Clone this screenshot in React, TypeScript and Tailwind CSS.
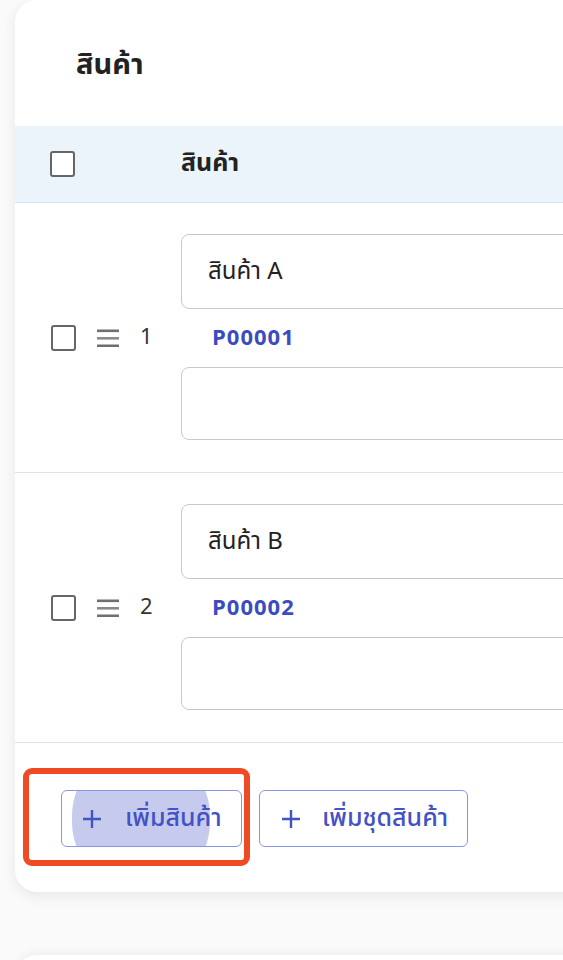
import React from "react";

const font = { fontFamily: '"Noto Sans Thai", "Noto Sans", "DejaVu Sans", sans-serif' };

function Checkbox() {
  return <div className="w-[25px] h-[26px] rounded-[3px] border-[2.5px] border-[#666666] bg-white shrink-0" />;
}

function DragIcon() {
  return (
    <svg width="22" height="18" viewBox="0 0 22 18" className="shrink-0">
      <rect x="0" y="0.5" width="22" height="2.6" fill="#6f6f6f" />
      <rect x="0" y="8" width="22" height="2.6" fill="#8a8a8a" />
      <rect x="0" y="15.5" width="22" height="2.6" fill="#6f6f6f" />
    </svg>
  );
}

function Plus() {
  return (
    <svg width="20" height="20" viewBox="0 0 20 20" className="relative shrink-0">
      <path d="M10 1v18M1 10h18" stroke="#4352c4" strokeWidth="2.4" />
    </svg>
  );
}

function Row({ n, name, code }: { n: number; name: string; code: string }) {
  return (
    <div className="h-[270px] border-b border-[#e3e3e3] flex">
      <div className="w-[166px] flex items-center pl-[36px]">
        <Checkbox />
        <div className="ml-[21px]"><DragIcon /></div>
        <span className="ml-[21px] text-[22px] text-[#333]">{n}</span>
      </div>
      <div className="flex-1 pt-[31px]">
        <div className="h-[75px] w-[420px] rounded-[8px] border-[1.5px] border-[#c8c8c8] flex items-center pl-[26px] text-[24px] text-[#222]">
          {name}
        </div>
        <div className="h-[58px] flex items-center pl-[31px] text-[22px] font-bold text-[#3b4cc0] tracking-[1px]">
          {code}
        </div>
        <div className="h-[73px] w-[420px] rounded-[8px] border-[1.5px] border-[#c8c8c8]" />
      </div>
    </div>
  );
}

export default function App() {
  return (
    <div className="relative w-[563px] h-[960px] bg-[#fafafa] overflow-hidden" style={font}>
      <div className="ml-[15px] w-[600px] h-[892px] bg-white rounded-[22px] shadow-[0_4px_14px_rgba(0,0,0,0.08)] overflow-hidden">
        <div className="h-[126px] flex items-center pl-[61px] pt-[6px] text-[29px] font-bold text-[#222]">สินค้า</div>
        <div className="h-[77px] bg-[#ebf3fb] border-b border-[#dbe2ea] flex items-center pl-[35px]">
          <Checkbox />
          <span className="ml-[106px] text-[25px] font-bold text-[#222]">สินค้า</span>
        </div>
        <Row n={1} name="สินค้า A" code="P00001" />
        <Row n={2} name="สินค้า B" code="P00002" />
        <div className="flex items-start pt-[47px] pl-[46px] gap-[17px]">
          <button className="relative overflow-hidden w-[181px] h-[57px] rounded-[6px] border-[1.5px] border-[#8c95e2] bg-white flex items-center pl-[20px] gap-[23px] text-[25px] font-medium text-[#4352c4]">
            <span className="absolute left-[10px] top-[-44px] w-[138px] h-[144px] rounded-full bg-[#c6cbee]" />
            <Plus />
            <span className="relative">เพิ่มสินค้า</span>
          </button>
          <button className="w-[209px] h-[57px] rounded-[6px] border-[1.5px] border-[#8c95e2] bg-white flex items-center pl-[21px] gap-[21px] text-[25px] font-medium text-[#4352c4]">
            <Plus />
            <span>เพิ่มชุดสินค้า</span>
          </button>
        </div>
      </div>
      <div className="absolute left-[23px] top-[768px] w-[227px] h-[98px] border-[6px] border-[#f04a24] rounded-[9px]" />
      <div className="ml-[15px] mt-[63px] w-[600px] h-[100px] bg-white rounded-[22px] shadow-[0_-2px_10px_rgba(0,0,0,0.06)]" />
    </div>
  );
}
